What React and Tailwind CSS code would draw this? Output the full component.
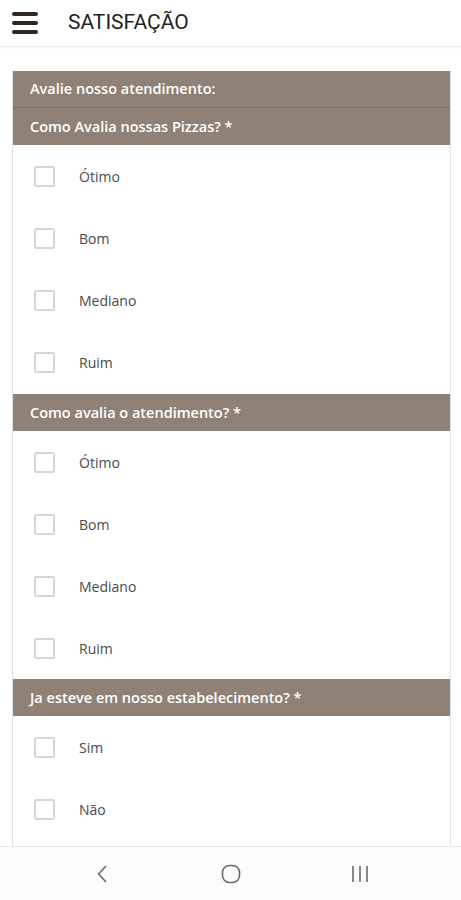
import React from "react";

const font = { fontFamily: "Roboto, 'Noto Sans', sans-serif" };
const open = { fontFamily: "'Open Sans', 'Noto Sans', sans-serif" };

function Row({ label, h = "h-[62px]" }) {
  return (
    <div className={`flex ${h} items-center`}>
      <div className="ml-[21px] h-[21px] w-[21px] rounded-[2px] border-2 border-[#d6d6d6] bg-white" />
      <span className="ml-[24px] text-[14px] text-[#4a4a4a]" style={open}>
        {label}
      </span>
    </div>
  );
}

function Header({ children, divider, h = "h-[37px]" }) {
  return (
    <div
      className={`flex ${h} items-center bg-[#8f8175] pl-[17px] text-[14.5px] font-semibold text-white ${
        divider ? "border-t border-[#7c6f65]" : ""
      }`}
      style={open}
    >
      {children}
    </div>
  );
}

export default function App() {
  return (
    <div className="flex h-[900px] w-[461px] flex-col overflow-hidden bg-white" style={font}>
      <div className="flex h-[47px] shrink-0 items-center border-b border-[#ececec] bg-white shadow-[0_1px_2px_rgba(0,0,0,0.04)]">
        <div className="ml-[12px] flex h-[22px] w-[26px] flex-col justify-between">
          <div className="h-[4px] rounded-full bg-[#2f2721]" />
          <div className="h-[4px] rounded-full bg-[#2f2721]" />
          <div className="h-[4px] rounded-full bg-[#2f2721]" />
        </div>
        <span className="ml-[30px] text-[21px] text-[#1f1f1f]">SATISFAÇÃO</span>
      </div>
      <div className="flex-1 overflow-hidden pl-[12px] pr-[10px] pt-[24px]">
        <div className="border-x border-[#e2e2e2] bg-white">
          <Header h="h-[36px]">Avalie nosso atendimento:</Header>
          <Header divider h="h-[38px]">
            Como Avalia nossas Pizzas? *
          </Header>
          <Row label="Ótimo" />
          <Row label="Bom" />
          <Row label="Mediano" />
          <Row label="Ruim" h="h-[63px]" />
          <Header>Como avalia o atendimento? *</Header>
          <Row label="Ótimo" />
          <Row label="Bom" />
          <Row label="Mediano" />
          <Row label="Ruim" />
          <Header>Ja esteve em nosso estabelecimento? *</Header>
          <Row label="Sim" />
          <Row label="Não" />
          <Row label="" />
        </div>
      </div>
      <div className="flex h-[54px] shrink-0 items-center justify-center gap-[109px] border-t border-[#e8e8e8] bg-[#fcfcfc]">
        <svg width="20" height="20" viewBox="0 0 20 20">
          <path d="M14 2 L6.5 10 L14 18" fill="none" stroke="#6b6b6b" strokeWidth="1.6" />
        </svg>
        <svg width="20" height="20" viewBox="0 0 20 20">
          <rect x="1.5" y="1.5" width="17" height="17" rx="7" fill="none" stroke="#6b6b6b" strokeWidth="1.6" />
        </svg>
        <svg width="20" height="20" viewBox="0 0 20 20">
          <path d="M3 2v16M10 2v16M17 2v16" fill="none" stroke="#6b6b6b" strokeWidth="1.6" />
        </svg>
      </div>
    </div>
  );
}
